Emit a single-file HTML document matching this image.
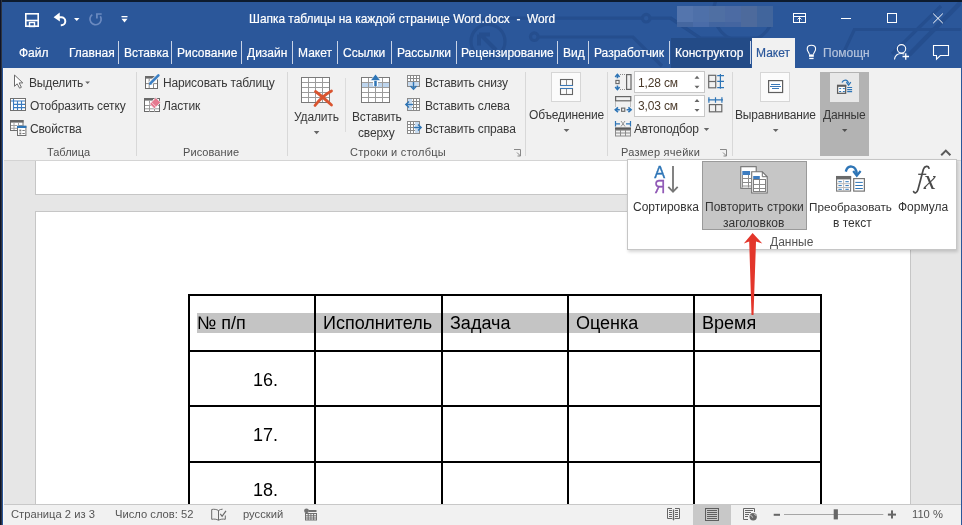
<!DOCTYPE html>
<html><head><meta charset="utf-8">
<style>
*{margin:0;padding:0;box-sizing:border-box}
html,body{width:962px;height:525px;overflow:hidden;background:#e6e6e6;font-family:"Liberation Sans",sans-serif;position:relative}
.a{position:absolute;white-space:nowrap}
body>div.a{will-change:transform}
#title{left:0;top:0;width:962px;height:68px;background:#2b579a}
.tt{color:#fff;font-size:12px;-webkit-text-stroke:0.2px #fff}
.tab{color:#fff;font-size:12px;top:46px;-webkit-text-stroke:0.2px #fff}
.tsep{position:absolute;top:41px;width:1px;height:23px;background:#c8d3e6}
#ribbon{left:0;top:68px;width:962px;height:93px;background:#f1f1f1;border-bottom:1px solid #d4d4d4}
.rt{color:#383838;font-size:12px;line-height:14px;letter-spacing:-0.15px}
.gl{color:#505050;font-size:11px;line-height:14px;top:144.9px}
.gsep{position:absolute;top:72px;width:1px;height:84px;background:#d8d8d8}
#status{left:0;top:504px;width:962px;height:21px;background:#f1f1f1;border-top:1px solid #c8c8c8}
.st{color:#555;font-size:11.2px;line-height:14px;top:507.1px}
.pt{color:#333;font-size:12px;line-height:14px}
.cell{position:absolute;color:#000;font-size:18px}
</style></head><body>
<div class="a" id="title"></div>
<svg class="a" style="left:0;top:0" width="962" height="68" viewBox="0 0 962 68">
<g stroke="#254e8e" stroke-width="3.2" fill="none">
<circle cx="488" cy="41.5" r="17"/>
<path d="M496 50 L480 34 M479 34.5 h11 M479 34.5 v11" stroke-width="4"/>
<circle cx="534.3" cy="36.7" r="3.8"/>
<path d="M538 37 H633 L662 66"/>
<circle cx="646.2" cy="18.2" r="3.8"/>
<path d="M420 18.2 H642.4 M650 18.2 H671 L700 38 L760 38"/>

<path d="M716 0 A30 30 0 0 0 770 26"/>
<path d="M670 18 L700 38"/>
<path d="M841 58 L854.4 29.5 H962"/>
<path d="M892 54 L941 6"/><path d="M909 55 L961 2" stroke-width="4.5"/>
</g>
<rect x="0" y="0" width="962" height="2" fill="#0d1b2e"/>
<g>
<rect x="677" y="6" width="16" height="16" fill="#5475ad"/><rect x="693" y="6" width="16" height="16" fill="#4e70a9"/>
<rect x="709" y="6" width="16" height="16" fill="#4f6fa3"/><rect x="725" y="6" width="16" height="16" fill="#4c6ba3"/>
<rect x="741" y="6" width="16" height="21" fill="#4d6a9c"/><rect x="757" y="6" width="16" height="21" fill="#41659c"/>
<rect x="677" y="22" width="16" height="5" fill="#4567a0"/><rect x="693" y="22" width="16" height="5" fill="#4a6ca8"/>
<rect x="709" y="22" width="16" height="5" fill="#4265a0"/><rect x="725" y="22" width="16" height="5" fill="#4465a0"/>
</g>
<g fill="none" stroke="#fff" stroke-width="1.6">
<rect x="25.8" y="13.8" width="12.4" height="12.4"/>
<path d="M26 20.5 H38"/>
<rect x="29.5" y="22.5" width="5" height="4" stroke-width="1.4"/>
</g>
<path d="M58 17.2 H61.3 A4 4 0 0 1 61.3 25.2 H60.8" fill="none" stroke="#fff" stroke-width="2"/>
<path d="M53.6 17.2 L59.7 12.6 L59.9 21.6 Z" fill="#fff"/>
<path d="M74 18 H79.5 L76.75 21 Z" fill="#fff"/>
<path d="M92.3 14.6 A5.6 5.6 0 1 0 100.3 16.2" fill="none" stroke="#6b8ac0" stroke-width="1.7"/>
<path d="M96.9 18.6 V14 H101.7" fill="none" stroke="#6b8ac0" stroke-width="1.7"/>
<rect x="121.5" y="16" width="6" height="1.3" fill="#fff"/>
<path d="M121.5 18.7 H127.5 L124.5 22.5 Z" fill="#fff"/>
<g fill="none" stroke="#fff" stroke-width="1">
<rect x="793.5" y="13.5" width="12" height="9"/>
<path d="M794 16.5 H805 M799.5 22 V17.5 M797.5 19.5 L799.5 17.5 L801.5 19.5"/>
<path d="M841 18.5 H851"/>
<rect x="887.5" y="13.5" width="9" height="9"/>
<path d="M933.2 13.6 L942.8 23.2 M942.8 13.6 L933.2 23.2"/>
</g>
<g fill="none" stroke="#fff" stroke-width="1.1">
<path d="M809.4 54.5 C809 52.3 807.2 51.2 807.2 48.9 C807.2 46.5 809 45.3 811.4 45.3 C813.8 45.3 815.6 46.5 815.6 48.9 C815.6 51.2 813.8 52.3 813.4 54.5"/>

<circle cx="901.5" cy="48.8" r="4.2"/></g><rect x="809" y="54.4" width="4.8" height="2.4" fill="#fff"/><rect x="809.2" y="57.8" width="4.4" height="1.3" fill="#fff"/><g fill="none" stroke="#fff" stroke-width="1.1">
<path d="M894.5 59.5 C895 55.5 897.5 53.5 901.5 53.5 C902.5 53.5 903.5 53.7 904.3 54"/>
<path d="M902.5 56.5 H909 M905.75 53.2 V59.8" stroke-width="1.3"/>
<path d="M933.5 45.5 H948.5 V55.5 H940.3 L936.5 59.2 V55.5 H933.5 Z"/>
</g>
</svg>
<div class="a tt" style="left:248.5px;top:12px;font-size:11.9px">Шапка таблицы на каждой странице Word.docx &nbsp;-&nbsp; Word</div>
<div class="a tab" style="left:19px">Файл</div>
<div class="a tab" style="left:69px">Главная</div>
<div class="tsep" style="left:118px"></div>
<div class="a tab" style="left:124px">Вставка</div>
<div class="tsep" style="left:171px"></div>
<div class="a tab" style="left:177px">Рисование</div>
<div class="tsep" style="left:241px"></div>
<div class="a tab" style="left:247px">Дизайн</div>
<div class="tsep" style="left:292px"></div>
<div class="a tab" style="left:298px">Макет</div>
<div class="tsep" style="left:337px"></div>
<div class="a tab" style="left:343px">Ссылки</div>
<div class="tsep" style="left:391px"></div>
<div class="a tab" style="left:397px">Рассылки</div>
<div class="tsep" style="left:456px"></div>
<div class="a tab" style="left:461px">Рецензирование</div>
<div class="tsep" style="left:557px"></div>
<div class="a tab" style="left:563px">Вид</div>
<div class="tsep" style="left:588px"></div>
<div class="a tab" style="left:594px">Разработчик</div>
<div class="a" style="left:671px;top:38px;width:80px;height:30px;background:#234b87"></div>
<div class="tsep" style="left:669px"></div>
<div class="a tab" style="left:675px">Конструктор</div>
<div class="tsep" style="left:750px"></div>
<div class="a" style="left:752px;top:38px;width:43px;height:30px;background:#f1f1f1"></div>
<div class="a tab" style="left:756px;color:#2b579a;-webkit-text-stroke:0.2px #2b579a">Макет</div>
<div class="a tab" style="left:823px;color:#b4c3dc;-webkit-text-stroke:0.2px #b4c3dc">Помощн</div>

<div class="a" id="ribbon"></div>
<div class="a rt" style="left:28.5px;top:76px">Выделить</div>
<div class="a rt" style="left:29.5px;top:99px">Отобразить сетку</div>
<div class="a rt" style="left:29.5px;top:121.5px">Свойства</div>
<div class="a gl" style="left:46.5px">Таблица</div>
<div class="gsep" style="left:136px"></div>
<div class="a rt" style="left:163px;top:76px">Нарисовать таблицу</div>
<div class="a rt" style="left:163px;top:99px">Ластик</div>
<div class="a gl" style="left:183px;letter-spacing:0.08px">Рисование</div>
<div class="gsep" style="left:287px"></div>
<div class="a rt" style="left:294px;top:110px">Удалить</div>
<div class="a" style="left:345px;top:78px;width:1px;height:54px;background:#dcdcdc"></div>
<div class="a rt" style="left:352px;top:110px">Вставить</div>
<div class="a rt" style="left:357.5px;top:126px">сверху</div>
<div class="a rt" style="left:424.5px;top:76px">Вставить снизу</div>
<div class="a rt" style="left:424.5px;top:99px">Вставить слева</div>
<div class="a rt" style="left:424.5px;top:121.5px">Вставить справа</div>
<div class="a gl" style="left:350.3px;letter-spacing:0.27px">Строки и столбцы</div>
<div class="gsep" style="left:525px"></div>
<div class="a" style="left:551px;top:72px;width:30px;height:30px;background:#fbfbfb;border:1px solid #d6d6d6"></div>
<div class="a rt" style="left:529px;top:108px">Объединение</div>
<div class="gsep" style="left:607px"></div>
<div class="a" style="left:634px;top:71px;width:71px;height:22px;background:#fff;border:1px solid #c8c8c8"></div>
<div class="a" style="left:634px;top:94.5px;width:71px;height:22px;background:#fff;border:1px solid #c8c8c8"></div>
<div class="a rt" style="left:637.5px;top:76px;color:#4a3a2a">1,28 см</div>
<div class="a rt" style="left:637.5px;top:99px;color:#4a3a2a">3,03 см</div>
<div class="a rt" style="left:634px;top:121.5px">Автоподбор</div>
<div class="a gl" style="left:621.3px;letter-spacing:0.25px">Размер ячейки</div>
<div class="gsep" style="left:732px"></div>
<div class="a" style="left:760px;top:72px;width:30px;height:30px;background:#fbfbfb;border:1px solid #d6d6d6"></div>
<div class="a rt" style="left:735px;top:108px">Выравнивание</div>
<div class="a" style="left:820px;top:72px;width:49px;height:84px;background:#b3b3b3"></div>
<div class="a" style="left:829.5px;top:73px;width:29px;height:29px;background:#e8e8e8"></div>
<div class="a rt" style="left:822.5px;top:108px">Данные</div>
<svg class="a" style="left:0;top:0" width="962" height="160" viewBox="0 0 962 160">
<!-- cursor -->
<path d="M14.5 75 V86.3 L17.2 83.8 L19.6 88.2 L21.4 87.3 L19.1 82.9 H22.8 Z" fill="#fff" stroke="#6a6a6a" stroke-width="1" stroke-linejoin="round"/>
<path d="M85.2 81.4 H90 L87.6 84.1 Z" fill="#666"/>
<!-- grid -->
<rect x="10.5" y="98.5" width="15" height="12" fill="#fff" stroke="#707070"/>
<path d="M11 101 H25 M13.5 104.4 H25 M13.5 107.6 H25 M13.5 99 V110 M17.5 101 V110 M21.5 101 V110" stroke="#3a7bc0" stroke-width="1.1" fill="none"/>
<!-- properties -->
<rect x="10.5" y="120.5" width="12.5" height="10" fill="#fff" stroke="#707070"/>
<rect x="10" y="120" width="13.5" height="2.6" fill="#666"/>
<path d="M11 125.5 H17 M11 128.3 H17 M14 122.5 V130 M18.5 122.5 V125.5 H23" stroke="#a0a0a0" fill="none"/>
<rect x="17.5" y="126.3" width="8.4" height="9.2" fill="#fff" stroke="#707070"/>
<rect x="17" y="125.8" width="9.4" height="2.2" fill="#2e75b6"/>
<rect x="19.3" y="129.6" width="2" height="1.8" fill="#777"/><rect x="19.3" y="132.6" width="2" height="1.8" fill="#777"/>
<path d="M22.4 130.5 h2.4 M22.4 133.5 h2.4" stroke="#777" stroke-width="1" fill="none"/>
<!-- draw table -->
<rect x="145.5" y="76.5" width="12" height="12" fill="#fff" stroke="#6a6a6a"/>
<rect x="145" y="76" width="13" height="2.6" fill="#6a6a6a"/>
<path d="M149.2 78.5 V88 M146 83.6 H157 M153.5 83.6 V88" stroke="#8a8a8a" fill="none"/>
<path d="M150 83.8 L158.6 75.2" stroke="#f1f1f1" stroke-width="4.4" fill="none"/>
<path d="M150.6 83.2 L158.4 75.4" stroke="#3b7fc4" stroke-width="2.6" fill="none" stroke-linecap="round"/>
<path d="M149 85 L149.8 82 L152 84.2 Z" fill="#3b7fc4"/>
<!-- eraser -->
<rect x="144.5" y="98.5" width="15" height="13" fill="#fff" stroke="#6a6a6a"/>
<rect x="144" y="98" width="9" height="2.6" fill="#6a6a6a"/>
<path d="M145 105.5 H159 M145 108.8 H159 M149.5 100.5 V112 M154.5 106 V112" stroke="#9a9a9a" fill="none"/>
<path d="M149.6 104 L155.8 97.6 L160.6 102.4 L154.4 108.8 Z" fill="#e5798f" stroke="#f1f1f1" stroke-width="0.8"/>
<path d="M151.3 102.2 L156.2 107" stroke="#f6d0d8" stroke-width="0.9"/>
<!-- delete -->
<g stroke="#7a7a7a" fill="none"><rect x="301.5" y="77.5" width="28" height="25" fill="#fff"/>
<path stroke="#9c9c9c" d="M308.5 78 V102 M315.5 78 V102 M322.5 78 V102 M302 82.5 H329 M302 87.5 H329 M302 92.5 H329 M302 97.5 H329"/></g>
<path d="M315.5 91.5 C321 95.5 326 100 331.5 105 M331.5 91 C325 94.5 319.5 99.5 315 105.5" stroke="#d9542f" stroke-width="2.8" fill="none" stroke-linecap="round"/>


<path d="M313.8 131.1 H319.4 L316.6 134.2 Z" fill="#666"/>
<!-- insert above -->
<g stroke="#7a7a7a" fill="none"><rect x="361.5" y="77.5" width="28" height="25" fill="#fff"/>
<rect x="362" y="83" width="27" height="4.5" fill="#bdd5ee" stroke="none"/>
<path stroke="#9c9c9c" d="M368.5 78 V102 M375.5 78 V102 M382.5 78 V102 M362 82.5 H389 M362 87.5 H389 M362 92.5 H389 M362 97.5 H389"/></g>
<path d="M375.5 86 V78.5" stroke="#fff" stroke-width="5"/>
<path d="M375.5 86 V79" stroke="#2e75b6" stroke-width="2.5"/>
<path d="M370.5 80.5 L375.5 74 L380.5 80.5 Z" fill="#2e75b6" stroke="#fff" stroke-width="0.6"/>
<!-- insert below -->
<g stroke="#8a8a8a" fill="none"><rect x="407.5" y="75.5" width="12" height="11" fill="#fff"/>
<path d="M410.5 76 V86 M413.5 76 V86 M416.5 76 V86 M408 78.5 H419 M408 81.5 H419 M408 84 H419"/></g>
<rect x="408" y="82" width="11" height="4" fill="#c8dbef"/>
<path d="M413.5 82 V88" stroke="#2e75b6" stroke-width="1.4"/>
<path d="M410.5 86 L413.5 89.3 L416.5 86" stroke="#2e75b6" stroke-width="1.4" fill="none"/>
<!-- insert left -->
<g stroke="#8a8a8a" fill="none"><rect x="407.5" y="98.5" width="12" height="12" fill="#fff"/>
<path d="M410.5 99 V110 M413.5 99 V110 M416.5 99 V110 M408 101.5 H419 M408 104.5 H419 M408 107.5 H419"/></g>
<rect x="408" y="99" width="4" height="11" fill="#c8dbef"/>
<path d="M406 104.5 H413" stroke="#2e75b6" stroke-width="1.4"/>
<path d="M409 101.5 L405.8 104.5 L409 107.5" stroke="#2e75b6" stroke-width="1.4" fill="none"/>
<!-- insert right -->
<g stroke="#8a8a8a" fill="none"><rect x="407.5" y="121.5" width="12" height="12" fill="#fff"/>
<path d="M410.5 122 V133 M413.5 122 V133 M416.5 122 V133 M408 124.5 H419 M408 127.5 H419 M408 130.5 H419"/></g>
<rect x="415" y="122" width="4" height="11" fill="#c8dbef"/>
<path d="M414 127.5 H421" stroke="#2e75b6" stroke-width="1.4"/>
<path d="M418 124.5 L421.2 127.5 L418 130.5" stroke="#2e75b6" stroke-width="1.4" fill="none"/>
<!-- launchers -->
<path d="M514 149.5 H520.5 V156 M517 152.5 L520.5 156 M520.5 153 V156 H517.5" stroke="#888" fill="none"/>
<path d="M720 149.5 H726.5 V156 M723 152.5 L726.5 156 M726.5 153 V156 H723.5" stroke="#888" fill="none"/>
<!-- merge -->
<g fill="none" stroke="#666" stroke-width="1.1"><rect x="560.5" y="79.5" width="12" height="6"/><rect x="560.5" y="88.5" width="12" height="6"/></g>
<path d="M566.5 80 V85 M566.5 89 V94" stroke="#8a8a8a" fill="none"/>
<path d="M560 85.5 H573 M560 88.5 H573" stroke="#3a78b8" stroke-width="1.1" fill="none"/>
<path d="M563.6 129.1 H569.4 L566.5 132.1 Z" fill="#666"/>
<!-- height icon -->
<path d="M617.4 74.5 V78.2 M617.4 85.5 V89.2" stroke="#2e75b6" stroke-width="1.6"/>
<path d="M615.2 77 L617.4 74.4 L619.6 77 M615.2 87 L617.4 89.6 L619.6 87" stroke="#2e75b6" stroke-width="1.6" fill="none"/>
<rect x="615.9" y="80.4" width="3.2" height="3.2" fill="none" stroke="#666" stroke-width="1.1"/>
<path d="M620 74.5 H626 M620 89.5 H626" stroke="#888" stroke-dasharray="1,1"/>
<rect x="626.6" y="74.6" width="4.4" height="14.8" fill="none" stroke="#666" stroke-width="1.2"/>
<!-- autofit etc -->
<rect x="615.6" y="96.6" width="15.2" height="4.2" fill="none" stroke="#666" stroke-width="1.2"/>
<path d="M615.5 101.5 V107 M630.5 101.5 V107" stroke="#888" stroke-dasharray="1,1"/>
<path d="M615.5 109.8 H619.8 M626.6 109.8 H630.8" stroke="#2e75b6" stroke-width="1.6"/>
<path d="M618 107.4 L615.3 109.8 L618 112.2 M628.4 107.4 L631.1 109.8 L628.4 112.2" stroke="#2e75b6" stroke-width="1.6" fill="none"/>
<rect x="621.6" y="108.1" width="3.2" height="3.2" fill="none" stroke="#666" stroke-width="1.1"/>
<!-- spinners -->
<path d="M694.5 78.8 H699.5 L697 75.8 Z M694.5 85.8 H699.5 L697 88.6 Z M694.5 102 H699.5 L697 99 Z M694.5 109 H699.5 L697 111.8 Z" fill="#666"/>
<!-- distribute rows -->
<g fill="none" stroke="#6a6a6a" stroke-width="1.2"><rect x="708.7" y="75.3" width="7" height="12.5"/><path d="M708.7 81.5 H715.7"/></g>
<path d="M720.4 74 V88.7 M717.2 75.6 H724 M717.2 81.3 H724 M717.2 87.6 H724" stroke="#2e75b6" stroke-width="1.2" fill="none"/>
<!-- distribute cols -->
<g fill="none" stroke="#6a6a6a" stroke-width="1.2"><rect x="709.4" y="104.6" width="12.4" height="7.2"/><path d="M715.6 104.6 V111.8"/></g>
<path d="M708.1 99.8 H723 M708.9 97.2 V102.7 M715.5 97.2 V102.7 M721.9 97.2 V102.7" stroke="#2e75b6" stroke-width="1.2" fill="none"/>
<!-- autofit -->
<path d="M615.5 121 V126.5 M630.5 121 V126.5 M616 123.8 H620 M626 123.8 H630" stroke="#2e75b6" stroke-width="1.2" fill="none"/>
<path d="M621 121 L625 126.5 M625 121 L621 126.5" stroke="#888" stroke-width="0.9" fill="none"/>
<rect x="615" y="127.4" width="16" height="2.8" fill="#5a5a5a"/>
<g fill="none" stroke="#8a8a8a"><rect x="615.5" y="130" width="15" height="6"/><path d="M616 133 H630 M620.5 130 V136 M625.5 130 V136"/></g>
<path d="M703.8 128.1 H709.2 L706.5 130.9 Z" fill="#666"/>
<!-- align -->
<rect x="768.6" y="80.6" width="14" height="11.9" fill="#fff" stroke="#606060" stroke-width="1.2"/>
<path d="M771 84.5 H780 M770 86.5 H781 M772 88.5 H779" stroke="#3a78b8" stroke-width="1" fill="none"/>
<path d="M772.9 129.1 H778.5 L775.7 132.1 Z" fill="#666"/>
<!-- data -->
<rect x="837.6" y="85.5" width="8" height="7.8" fill="#fff" stroke="#5e5e5e" stroke-width="1.3"/>
<rect x="837" y="84.8" width="9.2" height="2" fill="#5e5e5e"/>
<path d="M839.2 88.6 h2 M842.8 88.6 h2 M839.2 91.5 h2 M842.8 91.5 h2" stroke="#2e75b6" stroke-width="1"/>
<path d="M847.2 87.5 h4.9 M847.2 89.6 h4.9 M847.2 91.6 h4.9" stroke="#2e75b6" stroke-width="1.2"/>
<path d="M842 82.6 C843.5 79.2 847.5 79 848.6 83.4" stroke="#2e75b6" stroke-width="1.3" fill="none"/>
<path d="M846.4 82.2 L848.6 85.2 L850.8 82.2" stroke="#2e75b6" stroke-width="1.3" fill="none"/>
<path d="M842 129.1 H847.4 L844.7 132.1 Z" fill="#505050"/>
<!-- collapse caret -->
<path d="M941.2 155.3 L945.8 150.6 L950.4 155.3" stroke="#5a5a5a" stroke-width="2" fill="none"/>
</svg>
<!-- document -->
<div class="a" style="left:35px;top:161px;width:876px;height:34px;background:#fff;border:1px solid #c6c6c6;border-top:none"></div>
<div class="a" style="left:35px;top:211px;width:876px;height:300px;background:#fff;border:1px solid #c6c6c6;border-bottom:none"></div>

<!-- table -->
<div class="a" style="left:197px;top:313px;width:117px;height:20px;background:#c4c4c4"></div>
<div class="a" style="left:316px;top:313px;width:504px;height:20px;background:#c4c4c4"></div>
<div class="a" style="left:188px;top:294px;width:2px;height:220px;background:#000"></div>
<div class="a" style="left:314px;top:294px;width:2px;height:220px;background:#000"></div>
<div class="a" style="left:441px;top:294px;width:2px;height:220px;background:#000"></div>
<div class="a" style="left:567px;top:294px;width:2px;height:220px;background:#000"></div>
<div class="a" style="left:693px;top:294px;width:2px;height:220px;background:#000"></div>
<div class="a" style="left:820px;top:294px;width:2px;height:220px;background:#000"></div>
<div class="a" style="left:188px;top:294px;width:634px;height:2px;background:#000"></div>
<div class="a" style="left:188px;top:350px;width:634px;height:2px;background:#000"></div>
<div class="a" style="left:188px;top:405px;width:634px;height:2px;background:#000"></div>
<div class="a" style="left:188px;top:461px;width:634px;height:2px;background:#000"></div>
<div class="a cell" style="left:197px;top:313px">№ п/п</div>
<div class="a cell" style="left:323px;top:313px">Исполнитель</div>
<div class="a cell" style="left:450px;top:313px">Задача</div>
<div class="a cell" style="left:576px;top:313px">Оценка</div>
<div class="a cell" style="left:702px;top:313px">Время</div>
<div class="a cell" style="left:253px;top:369.5px">16.</div>
<div class="a cell" style="left:253px;top:424.5px">17.</div>
<div class="a cell" style="left:253px;top:479.7px">18.</div>
<!-- popup -->
<div class="a" style="left:627px;top:159px;width:330px;height:91px;background:#fff;border:1px solid #c6c6c6;box-shadow:1px 2px 3px rgba(0,0,0,0.16)"></div>
<div class="a" style="left:702px;top:161px;width:105px;height:69px;background:#c6c6c6;border:1px solid #9a9a9a"></div>
<div class="a pt" style="left:633px;top:199.8px">Сортировка</div>
<div class="a pt" style="left:704.5px;top:199.8px">Повторить строки</div>
<div class="a pt" style="left:722.5px;top:215.8px">заголовков</div>
<div class="a pt" style="left:809px;top:199.8px;font-size:11.7px">Преобразовать</div>
<div class="a pt" style="left:833px;top:215.8px">в текст</div>
<div class="a pt" style="left:897.5px;top:199.8px">Формула</div>
<div class="a pt" style="left:770px;top:234.8px;color:#555">Данные</div>
<svg class="a" style="left:0;top:0" width="962" height="330" viewBox="0 0 962 330">
<text transform="translate(654.2,177.9) scale(0.95,1)" font-family="Liberation Sans" font-size="17.2" fill="#2e75b6" stroke="#2e75b6" stroke-width="0.35">A</text>
<text transform="translate(654.2,192.7) scale(0.85,1)" font-family="Liberation Sans" font-size="17.8" fill="#8e56b4" stroke="#8e56b4" stroke-width="0.35">Я</text>
<path d="M673 166 V192" stroke="#757575" stroke-width="1.8" fill="none"/>
<path d="M668.3 186.8 L673 191.8 L677.7 186.8" stroke="#757575" stroke-width="1.8" fill="none"/>
<!-- repeat header -->
<path d="M740.8 166.7 H756.2 V171 M751 188.3 H740.8 Z" fill="none"/>
<rect x="740.8" y="166.7" width="15.4" height="21.6" fill="#fff" stroke="#707070" stroke-width="1.1"/>
<rect x="742.3" y="171" width="7.8" height="4" fill="#3c7cc0"/>
<path d="M742.5 175 V187.5 M742.5 178.5 H751 M742.5 182.5 H751 M742.5 186 H751 M748.5 175 V187.5" stroke="#8c8c8c" fill="none"/>
<path d="M751.7 171.8 H762.3 L767.2 176.7 V193 H751.7 Z" fill="#fff" stroke="#707070" stroke-width="1.1"/>
<path d="M762.3 171.8 V176.7 H767.2" fill="none" stroke="#707070" stroke-width="1"/>
<rect x="753.2" y="176" width="6.6" height="4" fill="#3c7cc0"/>
<rect x="759.8" y="179" width="5.9" height="1" fill="#3c7cc0"/>
<path d="M753.5 184.5 H765.5 M753.5 188.5 H765.5 M759.5 180 V191.5" stroke="#8c8c8c" fill="none"/>
<rect x="753.5" y="179.5" width="12" height="12" fill="none" stroke="#808080" stroke-width="1"/>
<!-- convert -->
<rect x="836.6" y="176.5" width="14" height="14.6" fill="#fff" stroke="#777" stroke-width="1.1"/>
<rect x="836.1" y="176" width="15" height="3.4" fill="#6a6a6a"/>
<path d="M843.6 179.5 V191 M837 183.7 H850.2 M837 187.5 H850.2" stroke="#bbb" fill="none"/>
<path d="M838.4 181.7 h3.4 M845.4 181.7 h3.4 M838.4 185.6 h3.4 M845.4 185.6 h3.4 M838.4 189.3 h3.4 M845.4 189.3 h3.4" stroke="#2e75b6" stroke-width="1" fill="none"/>
<rect x="853.7" y="178.6" width="10.7" height="12.5" fill="#fff" stroke="#777" stroke-width="1.2"/>
<path d="M855.3 182.4 H862.8 M855.3 185.5 H862.8 M855.3 188.5 H862.8" stroke="#2e75b6" stroke-width="1" fill="none"/>
<path d="M845.8 171.6 C847.5 164.5 856 164.5 856.8 174" stroke="#2e75b6" stroke-width="2.4" fill="none"/>
<path d="M853.2 171 L856.8 175.8 L860.6 171" stroke="#2e75b6" stroke-width="2.2" fill="none"/>
<path d="M929 168.2 C928.3 165.6 924.6 165.6 923.3 169.5 L918 189.5 C917 193.2 914.6 193.6 913.6 191.6" stroke="#4a4a4a" stroke-width="1.7" fill="none" stroke-linecap="round"/><path d="M918.2 174.3 H926.3" stroke="#4a4a4a" stroke-width="1.3"/><text x="923.8" y="189" font-family="Liberation Serif" font-style="italic" font-size="27.5" fill="#4a4a4a">x</text>
<!-- red arrow -->

<path d="M752.6 233 L762.3 243.6 L756 241.6 L753.5 315 L751.5 315 L749.2 241.6 L743.8 243.6 Z" fill="#e3362b"/>
</svg>
<div class="a" id="status"></div>
<div class="a st" style="left:11px">Страница 2 из 3</div>
<div class="a st" style="left:115px">Число слов: 52</div>
<div class="a st" style="left:243px">русский</div>
<div class="a st" style="left:912px">110 %</div>
<div class="a" style="left:693px;top:505px;width:38px;height:20px;background:#c8c8c8"></div>
<svg class="a" style="left:0;top:500px" width="962" height="25" viewBox="0 500 962 25">
<g fill="none" stroke="#6a6a6a" stroke-width="1">
<path d="M218.5 510.5 C216.5 509.3 214 509 211.7 509.5 V519.3 C214 518.9 216.5 519 218.5 520.3 C220.5 519 223 518.9 225.3 519.3 V515.5 M218.5 510.5 C219.8 509.6 221.2 509.2 222.6 509.2 M218.5 510.5 V520"/>
<path d="M220.3 513.8 L222.1 516.3 L226 510.8" stroke-width="1.2"/>
</g>
<circle cx="306.5" cy="510.8" r="2.4" fill="#707070"/>
<rect x="308.5" y="510" width="8" height="2" fill="#707070"/>
<g fill="none" stroke="#707070" stroke-width="1"><rect x="305.5" y="513.5" width="11" height="6.5"/>
<path d="M306 515.8 H316 M306 518 H316 M308.2 513.5 V520 M310.9 513.5 V520 M313.6 513.5 V520"/></g>
<g fill="none" stroke="#666" stroke-width="1">
<path d="M672 508.5 H667.5 V518.5 H672 M675 508.5 H679.5 V518.5 H675"/>
<path d="M669 510.5 H672 M669 512.5 H672 M669 514.5 H672 M669 516.5 H672 M675 510.5 H678 M675 512.5 H678 M675 514.5 H678 M675 516.5 H678"/>
<path d="M673.5 509.5 V519.5" stroke-width="1.3"/>
</g>
<path d="M672.2 518.6 L673.5 520.8 L674.8 518.6 Z" fill="#666"/>
<g fill="none" stroke="#5e5e5e" stroke-width="1">
<rect x="705.5" y="508.5" width="13" height="12"/>
<path d="M707 510.5 H717 M707 512.5 H717 M707 514.5 H717 M707 516.5 H717 M707 518.5 H717"/>
</g>
<g fill="none" stroke="#666" stroke-width="1">
<path d="M748 519.5 H743.5 V508.5 H754.5 V512"/>
<path d="M745 510.5 H753 M745 512.5 H751 M745 514.5 H749 M745 516.5 H748"/>
</g>
<circle cx="753.2" cy="516.8" r="4.6" fill="#f1f1f1"/>
<circle cx="753.2" cy="516.8" r="3.7" fill="#666"/>
<path d="M750.3 515.2 C751.5 515.4 752.3 516.5 752.6 517.6 M754.2 513.6 C754.6 514.8 755.8 515.5 756.6 515.8" stroke="#dcdcdc" stroke-width="0.9" fill="none"/>
<rect x="773.7" y="513.8" width="6.3" height="2" fill="#666"/>
<rect x="784" y="514" width="99.3" height="1" fill="#a6a6a6"/>
<rect x="833.7" y="509.3" width="4.2" height="10.1" fill="#666"/>
<rect x="887.9" y="513.6" width="8.1" height="2" fill="#666"/>
<rect x="891" y="510.4" width="2" height="8.1" fill="#666"/>
</svg>
<div class="a" style="left:0;top:0;width:1px;height:525px;background:#0f1428"></div>
<div class="a" style="left:1px;top:0;width:1px;height:525px;background:#2d3440"></div>
<div class="a" style="left:2px;top:2px;width:1px;height:523px;background:#2b579a"></div>
<div class="a" style="left:3px;top:68px;width:1px;height:457px;background:#f7f7f7"></div>
<div class="a" style="left:961px;top:2px;width:1px;height:523px;background:#2b579a"></div>
</body></html>
